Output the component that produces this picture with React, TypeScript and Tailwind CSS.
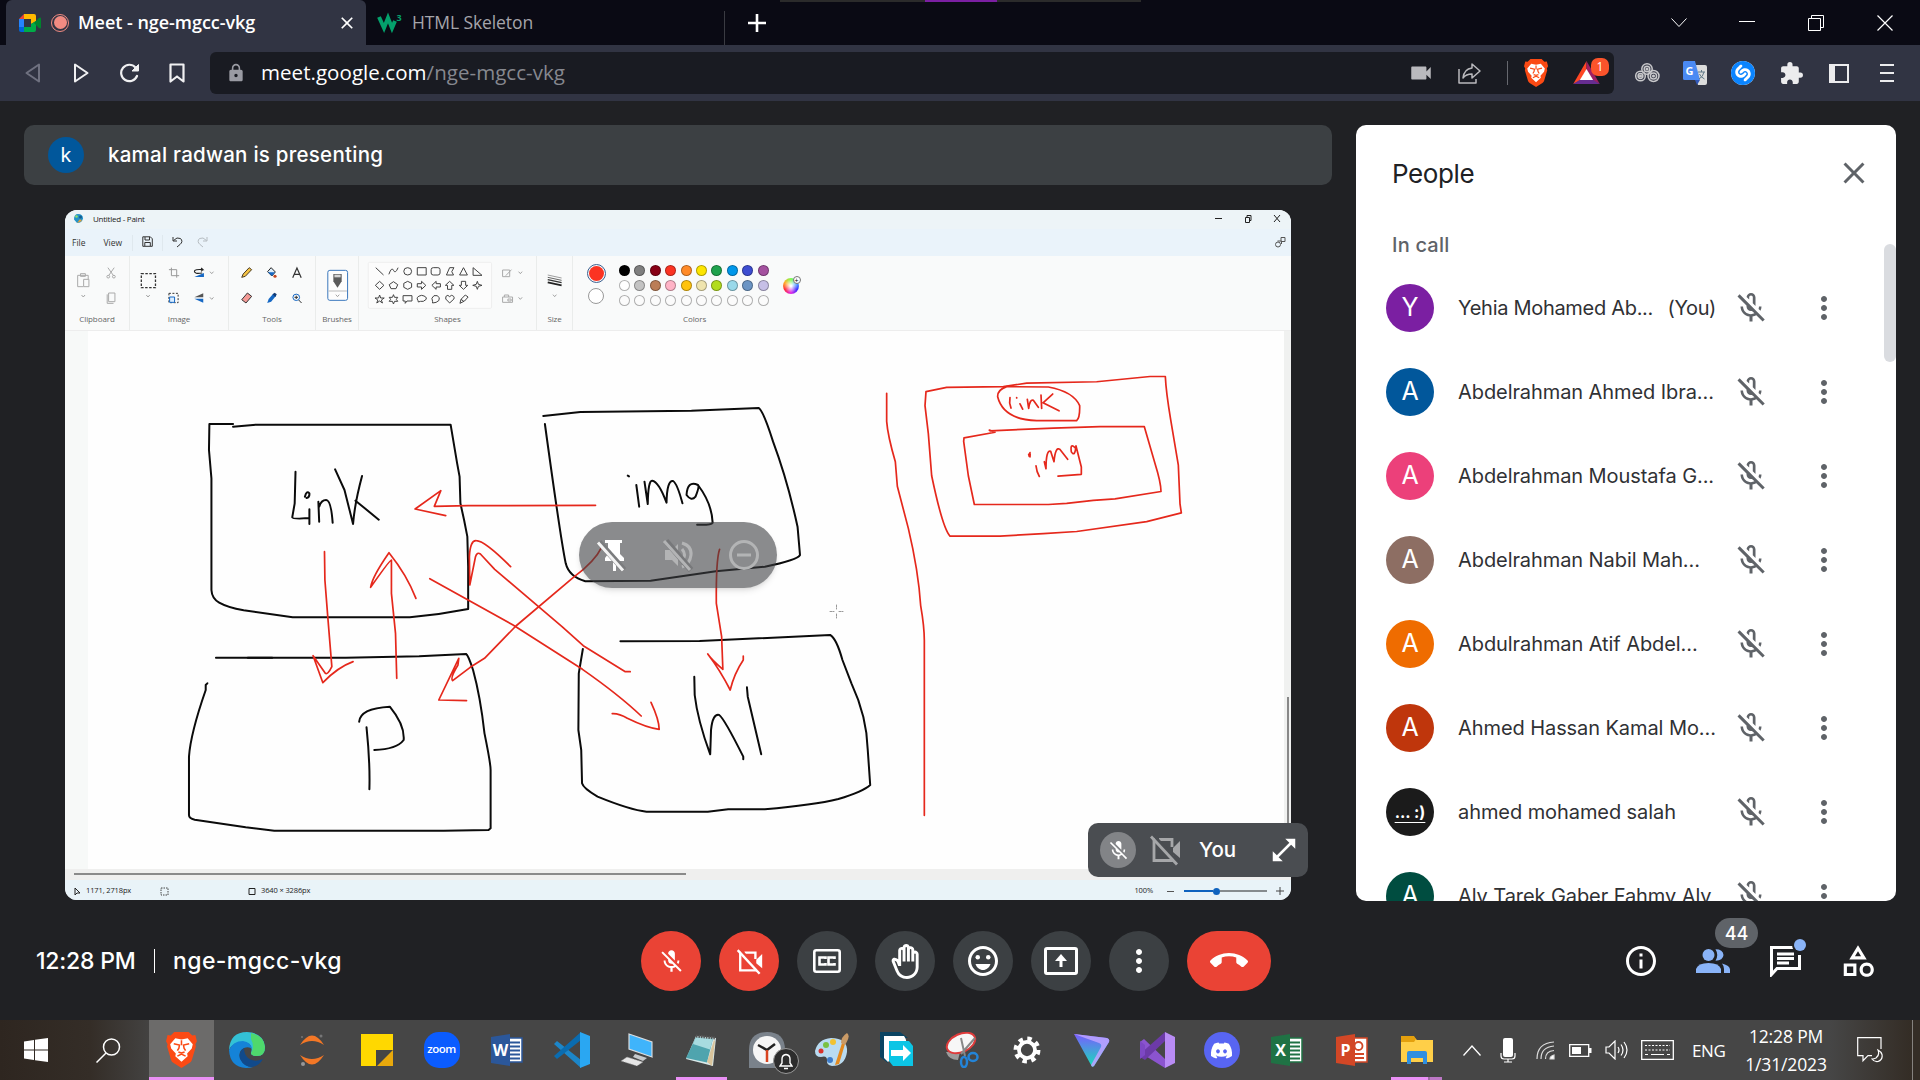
import React from "react";
import {
  MdMicOff,
  MdOutlineMicOff,
  MdOutlineBackHand,
  MdOutlineEmojiEmotions,
  MdMoreVert,
  MdCallEnd,
  MdInfoOutline,
  MdOutlineCategory,
  MdClose,
  MdVideocam,
  MdLock,
  MdExtension,
  MdOpenInFull,
} from "react-icons/md";
import { SiShazam } from "react-icons/si";
import { FaDiscord } from "react-icons/fa";

const SEGOE = "font-['Open_Sans',sans-serif]";
const GOOGLE = "font-['Inter',sans-serif]";

type Kids = { children?: React.ReactNode };

/* ---------- Browser chrome ---------- */

function MeetLogo() {
  return (
    <svg width="22" height="18" viewBox="0 0 22 18">
      <path d="M0 5 5 0v5z" fill="#ea4335" />
      <path d="M5 0h10q2 0 2 2v5l-5 3V5H5z" fill="#ffba00" />
      <path d="M0 5h5v8H0z" fill="#2684fc" />
      <path d="M0 13h5v5H2q-2 0-2-2z" fill="#0066da" />
      <path d="M5 13h7v-3l5-3v9q0 2-2 2H5z" fill="#00ac47" />
      <path d="M15 9l5-5q2-1 2 .5v9q0 1.500-2 .5z" fill="#00832d" />
    </svg>
  );
}

function TabStrip() {
  return (
    <div className="relative flex h-[45px] shrink-0 items-center bg-[#0a0a14] pl-[6px]">
      <div className="flex h-full w-[360px] items-center rounded-t-md bg-[#313443] pl-[13px] pr-[9px]">
        <MeetLogo />
        <span className="ml-[10px] flex size-[18px] items-center justify-center rounded-full border-[1.500px] border-[#f28b82]">
          <span className="size-[13px] rounded-full bg-[#f28b82]" />
        </span>
        <span className="ml-[9px] text-[18px] font-semibold tracking-[-0.030px] text-white">Meet - nge-mgcc-vkg</span>
        <MdClose className="ml-auto text-white" size={20} />
      </div>
      <div className="flex h-full w-[358px] items-center pl-[12px]">
        <svg width="25" height="18" viewBox="0 0 25 18" className="overflow-visible">
          <path d="M1 3l5 11 4-10 4 10 3-7" fill="none" stroke="#04a16c" strokeWidth="4" />
          <text x="18.500" y="7" fontSize="9" fontWeight="700" fill="#04a16c">3</text>
        </svg>
        <span className="ml-[9px] text-[17.500px] tracking-[-0.100px] text-[#a5a5ab]">HTML Skeleton</span>
      </div>
      <div className="h-[34px] w-px self-end bg-[#3a3b42]" />
      <svg width="20" height="20" viewBox="0 0 20 20" className="ml-[22px]">
        <path d="M10 1v18M1 10h18" stroke="#fff" strokeWidth="2.600" />
      </svg>
      <div className="ml-auto flex items-center pr-[27px]">
        <svg width="16" height="12" viewBox="0 0 16 12" className="mr-[52px]">
          <path d="M.5 1.500 8 9.500l7.500-8" fill="none" stroke="#fff" strokeWidth="1" />
        </svg>
        <svg width="16" height="16" viewBox="0 0 16 16" className="mr-[53px]">
          <path d="M0 6.500h16" stroke="#fff" />
        </svg>
        <svg width="16" height="16" viewBox="0 0 16 16" className="mr-[53px]">
          <path d="M.5 3.500h12v12H.5zM3.500 3V.5h12v12H13" fill="none" stroke="#fff" />
        </svg>
        <svg width="16" height="16" viewBox="0 0 16 16">
          <path d="M.5.5l15 15m0-15l-15 15" stroke="#fff" strokeWidth="1.200" />
        </svg>
      </div>
      <div className="absolute left-[780px] top-0 flex h-[2px] w-[361px] justify-center bg-[#2b2b2b]">
        <div className="w-[72px] bg-[#7b1fa2]" />
      </div>
    </div>
  );
}

function ToolCell({ children }: Kids) {
  return <div className="flex w-12 items-center justify-center">{children}</div>;
}

function Swirl({ x, y, r }: { x: number; y: number; r: number }) {
  return (
    <g fill="none" stroke="#c8c8cb" strokeWidth="1.500">
      <circle cx={x} cy={y} r={r} />
      <circle cx={x} cy={y} r={r - 2.400} />
      <circle cx={x} cy={y} r="0.800" />
    </g>
  );
}

function Toolbar() {
  return (
    <div className="flex h-14 shrink-0 items-center bg-[#313443] pl-[9px] pr-[9px]">
      <ToolCell>
        <svg width="16" height="20" viewBox="0 0 16 20"><path d="M14 1.500v17L1.500 10z" fill="none" stroke="#6f7180" strokeWidth="2" strokeLinejoin="round" /></svg>
      </ToolCell>
      <ToolCell>
        <svg width="16" height="20" viewBox="0 0 16 20"><path d="M2 1.500v17L14.500 10z" fill="none" stroke="#f0f0f2" strokeWidth="2" strokeLinejoin="round" /></svg>
      </ToolCell>
      <ToolCell>
        <svg width="21" height="20" viewBox="0 0 21 20">
          <path d="M16.500 4.500A8.200 8.200 0 1 0 18 13" fill="none" stroke="#f0f0f2" strokeWidth="2.200" strokeLinecap="round" />
          <path d="M19.500 1.500v6.500H13z" fill="#f0f0f2" stroke="#f0f0f2" strokeLinejoin="round" />
        </svg>
      </ToolCell>
      <ToolCell>
        <svg width="16" height="20" viewBox="0 0 16 20"><path d="M1.500 1.500h13v17L8 13.500l-6.500 5z" fill="none" stroke="#f0f0f2" strokeWidth="2.200" strokeLinejoin="round" /></svg>
      </ToolCell>
      <div className="ml-[9px] flex h-[42px] w-[1404px] items-center rounded-md bg-[#191b22] pl-[16px]">
        <MdLock size={20} className="text-[#9a9ba3]" />
        <span className="ml-[15px] pb-[2px] text-[20.500px] tracking-[0.050px] text-[#86888f]">
          <span className="text-white">meet.google.com</span>/nge-mgcc-vkg
        </span>
        <div className="ml-auto flex items-center pr-[4px]">
          <MdVideocam size={26} className="mr-[24px] text-[#b9b9bd]" />
          <svg width="23" height="22" viewBox="0 0 23 22" className="mr-[26px]">
            <path d="M1 7v14h17v-4M5 16q1-9 9-10V2l8 7-8 7v-4q-6 0-9 4z" fill="none" stroke="#b9b9bd" strokeWidth="1.500" strokeLinejoin="round" />
          </svg>
          <div className="mr-[16px] h-6 w-px bg-[#66686f]" />
          <BraveMark size={28} />
          <div className="relative ml-[25px] h-[30px] w-[37px]">
            <svg width="27" height="23" viewBox="0 0 30 26" className="absolute left-0 top-[3px]">
              <path d="M15 0 0 26l8-4 7-12z" fill="#ff4724" />
              <path d="M15 0l15 26-8-4-7-12z" fill="#9e1f63" />
              <path d="M0 26h30l-8-5H8z" fill="#662d91" />
              <path d="M15 9l7.500 12.500h-15z" fill="#fff" />
            </svg>
            <span className="absolute right-[1px] top-0 flex h-[18px] w-[18px] items-center justify-center rounded-[7px] bg-[#fb542b] text-[12px] text-white">1</span>
          </div>
        </div>
      </div>
      <div className="ml-[9px] flex items-center">
        <ToolCell>
          <svg width="25" height="20" viewBox="0 0 25 20"><Swirl x={5.500} y={13} r={4.800} /><Swirl x={12} y={6} r={5.200} /><Swirl x={18.500} y={13} r={5.500} /></svg>
        </ToolCell>
        <ToolCell>
          <svg width="24" height="24" viewBox="0 0 24 24">
            <path d="M9 4h13q2 0 2 2v16q0 2-2 2H15z" fill="#dcdcdc" />
            <path d="M0 1.500Q0 0 1.500 0H12l5 19H1.500Q0 19 0 17.500z" fill="#4a8af4" />
            <path d="M12 19h5l-3 5z" fill="#3057b8" />
            <text x="2.500" y="14" fontSize="11" fontWeight="700" fill="#fff">G</text>
            <path d="M15 11h7M18.500 9v2M21 11q-1 5-5 7M16.500 13q1 3 5 5" fill="none" stroke="#607988" />
          </svg>
        </ToolCell>
        <ToolCell><span className="rounded-full bg-white"><SiShazam size={24} className="text-[#0a84ff]" /></span></ToolCell>
        <ToolCell><MdExtension size={25} className="text-[#ececee]" /></ToolCell>
        <ToolCell>
          <svg width="20" height="19" viewBox="0 0 20 19"><path d="M1 1h18v17H1z" fill="none" stroke="#ececee" strokeWidth="2" /><path d="M1 1h5v17H1z" fill="#ececee" /></svg>
        </ToolCell>
        <ToolCell>
          <svg width="14" height="20" viewBox="0 0 14 20"><path d="M0 2h14M0 10h14M0 18h14" stroke="#ececee" strokeWidth="2" /></svg>
        </ToolCell>
      </div>
    </div>
  );
}

/** Orange shield with the white lion face. */
function BraveMark({ size }: { size: number }) {
  return (
    <svg width={size * 0.860} height={size} viewBox="0 0 30 35">
      <path d="M8 0h14l3.500 3.500 3-.5L30 9l-1.500 3L29 14l-4 13.500q-.5 1.500-2 2.500L15 35l-8-5q-1.500-1-2-2.500L1 14l.5-2L0 9l1.500-6 3 .5z" fill="#fb4a14" />
      <path d="M9 6l6 1.200L21 6l5 6-1 4-4.500 5 .5 2.500-6 5.500-6-5.500.5-2.500L5 16l-1-4z" fill="#fff" />
      <path d="M7.500 11.500l5.500 1.200-.5 3-1.500 2.500M22.500 11.500l-5.500 1.200.5 3 1.500 2.500M12 19.500l3 1 3-1M11 23.500l4-2 4 2M15 8v5" fill="none" stroke="#fb4a14" strokeWidth="1.500" />
    </svg>
  );
}

/* ---------- Shared Paint window ---------- */

/** A ribbon section: glyph strip on top and its caption underneath. */
function RibbonGroup({ label, width, box, children }: Kids & { label: string; width: number; box: string }) {
  return (
    <div className="flex h-full shrink-0 flex-col items-center border-r border-[#eaeceb]" style={{ width }}>
      <svg viewBox={box} preserveAspectRatio="none" className="h-[55px] w-full [&_*]:[vector-effect:non-scaling-stroke]">
        {children}
      </svg>
      <span className="mt-[2px] text-[8px] leading-[12px] tracking-[-0.100px] text-[#666]">{label}</span>
    </div>
  );
}

function Chevrons({ at }: { at: [number, number][] }) {
  return <g fill="none" stroke="#999" strokeWidth="0.900">{at.map(([x, y]) => <path key={`${x}-${y}`} d={`M${x - 5} ${y - 3}l5 6 5-6`} />)}</g>;
}

const swatches = [
  ["#000000", "#7f7f7f", "#880015", "#fb3322", "#ff8a27", "#fde500", "#1fa24d", "#0097ea", "#3d4dd1", "#a4519f"],
  ["#ffffff", "#c3c3c3", "#bb7d56", "#ffb3c6", "#ffc30e", "#efe4ae", "#b2dc1c", "#99d9ea", "#6c95c4", "#c6bfe6"],
];

function Swatch({ color }: { color: string }) {
  return <span className="size-[11px] rounded-full border border-[#0000004d]" style={{ background: color }} />;
}

function Ribbon() {
  return (
    <div className="flex h-[75px] shrink-0 border-b border-[#ededed] bg-[#f9fafa]">
      <RibbonGroup label="Clipboard" width={65} box="14 153 182 165">
        <g fill="none" stroke="#aaa" strokeWidth="1">
          <path d="M66 245H50v-34h30v12M58 206h14v8H58zM67 223h15v22H67z" />
          <path d="M136 188l16 24M154 188l-16 24" /><circle cx="137" cy="215" r="4" /><circle cx="153" cy="215" r="4" />
          <path d="M138 264h18v26h-18zM134 268v27h18" />
        </g>
        <Chevrons at={[[66, 273]]} />
      </RibbonGroup>
      <RibbonGroup label="Image" width={99} box="196 153 277 165">
        <rect x="228" y="206" width="40" height="42" fill="none" stroke="#333" strokeWidth="1.300" strokeDasharray="2.500 1.500" />
        <path d="M313 188v24h22M306 194h22v24" fill="none" stroke="#999" />
        <path d="M378 216l27-12v12z" fill="#1668c4" />
        <path d="M400 204q-22 4-22-5 0-7 24-5l-5-5m5 5l-5 5" fill="none" stroke="#222" strokeWidth="1.100" />
        <rect x="306" y="265" width="26" height="28" fill="none" stroke="#333" strokeDasharray="2 1.500" />
        <rect x="308" y="276" width="14" height="16" fill="#dceeff" stroke="#1668c4" />
        <path d="M378 277l25-12v12z" fill="#555" /><path d="M378 281l25 12v-12z" fill="#1668c4" />
        <Chevrons at={[[247, 273], [427, 203], [427, 280]]} />
      </RibbonGroup>
      <RibbonGroup label="Tools" width={87} box="473 153 243 165">
        <path d="M509 217l4-10 17-19 7 6-18 20z" fill="#f5c344" stroke="#4a3a20" />
        <path d="M582 200l10-12 12 13-10 12z" fill="#dfeefa" stroke="#222" /><path d="M583 202h20l-9 11z" fill="#1668c4" /><circle cx="603" cy="214" r="4.500" fill="#c5441c" />
        <path d="M653 218l12-29 12 29M658 208h14" fill="none" stroke="#333" strokeWidth="1.200" />
        <path d="M509 284l16-20 12 10-16 20z" fill="#f49a96" stroke="#333" />
        <path d="M581 294l4-12 13-16 8 6-14 18z" fill="#1668c4" /><path d="M596 268l6-5 6 5-4 8z" fill="#123a75" />
        <circle cx="663" cy="277" r="9.500" fill="none" stroke="#1668c4" /><path d="M658 277h10M663 272v10M670 285l8 9" stroke="#333" />
      </RibbonGroup>
      <RibbonGroup label="Brushes" width={43} box="716 153 121 165">
        <rect x="750" y="196" width="57" height="90" rx="6" fill="#fdfdfd" stroke="#3b78bd" />
        <path d="M752 258h53" stroke="#bbb" />
        <path d="M766 207h24v22l-5 8-7 11-7-11-5-8z" fill="#5b5b5b" /><path d="M769 209h18v8h-18z" fill="#d5d5d5" />
        <Chevrons at={[[778, 272]]} />
      </RibbonGroup>
      <RibbonGroup label="Shapes" width={178} box="837 153 498 165">
        <rect x="863" y="172" width="347" height="138" rx="4" fill="#fcfcfc" stroke="#ebebeb" strokeWidth="0.800" />
        <g fill="none" stroke="#444" strokeWidth="1">
          <path d="M884 188l22 22M921 208q8-24 13-12t13-8" /><circle cx="974" cy="199" r="11" />
          <path d="M1001 188h25v22h-25z" /><rect x="1040" y="188" width="25" height="22" rx="6" />
          <path d="M1092 188h12l-6 12 5 10h-20zM1131 188l11 22h-22zM1158 188v23h25z" />
          <path d="M895 229l12 12-12 12-12-12zM934 230l12 9-5 12h-14l-5-12zM974 229l11 6v12l-11 6-11-6v-12z" />
          <path d="M1001 236h12v-7l12 12-12 12v-7h-12zM1066 236h-12v-7l-12 12 12 12v-7h12zM1086 253v-12h-6l12-12 12 12h-6v12zM1125 229v12h-6l12 12 12-12h-6v-12zM1170 229l3 9 10 3-10 3-3 9-3-9-10-3 10-3z" />
          <path d="M895 270l3 9h10l-8 6 3 9-8-6-8 6 3-9-8-6h10zM934 269l3 8h9l-4 6 4 6h-9l-3 8-3-8h-9l4-6-4-6h9z" />
          <path d="M961 272h25v16h-14l-5 7v-7h-6zM1004 291l-1-4q-8-12 10-16 16 3 13 12-8 9-16 6zM1044 294v-5q-6-10 4-17 10-3 15 6 2 10-9 14zM1092 294l-11-12q-2-10 6-11l5 4 5-4q10 2 7 11zM1121 295l3-12 12-13 8 6-10 12zM1124 283l8 6" />
        </g>
        <path d="M1241 195h20v20h-20zM1250 212l16-18M1241 276h28v16h-28zM1246 276v-6h12v6M1256 282h9v6h-9z" fill="none" stroke="#aaa" />
        <Chevrons at={[[1291, 203], [1291, 280]]} />
      </RibbonGroup>
      <RibbonGroup label="Size" width={36} box="1335 153 101 165">
        <path d="M1366 210l40 9" stroke="#777" strokeWidth="0.700" /><path d="M1366 217l40 9" stroke="#555" strokeWidth="0.900" />
        <path d="M1366 224l40 9" stroke="#333" strokeWidth="1.300" /><path d="M1366 232l40 9" stroke="#222" strokeWidth="1.900" />
        <Chevrons at={[[1386, 272]]} />
      </RibbonGroup>
      <div className="flex w-[243px] flex-col">
        <div className="flex h-[57px] pl-[13px]">
          <div className="flex w-5 flex-col items-center gap-[5px] pt-[8px]">
            <span className="flex size-[19px] shrink-0 items-center justify-center rounded-full border border-[#3b5f8f]"><span className="size-[15px] rounded-full bg-[#fb3322]" /></span>
            <span className="size-[16px] shrink-0 rounded-full border border-[#999] bg-white" />
          </div>
          <div className="ml-[13px] mt-[8.500px] grid grid-cols-10 content-start gap-x-[4.400px] gap-y-[4.400px]">
            {swatches.flat().map((c) => <Swatch key={c} color={c} />)}
            {Array.from({ length: 10 }, (_, i) => <Swatch key={i} color="#fbfbfb" />)}
          </div>
          <div className="relative ml-[14px] mt-[22px] size-4 rounded-full bg-[radial-gradient(circle,#fff_5%,transparent_60%),conic-gradient(#7dff4f,#49b4ff,#3b2bff,#e02be8,#ff2b3d,#ffb02b,#7dff4f)]">
            <span className="absolute -right-[2px] -top-[2px] flex size-2 items-center justify-center rounded-full border border-[#777] bg-white text-[7px] leading-none">+</span>
          </div>
        </div>
        <span className="pl-[110px] text-[8px] leading-[12px] tracking-[-0.100px] text-[#666]">Colors</span>
      </div>
    </div>
  );
}

/** Freehand strokes on the Paint canvas. */
function Sketch() {
  const crop = "scale(0.408163 0.333333)";
  return (
    <svg viewBox="65 331 1226 538" className="h-full w-full [&_path]:[vector-effect:non-scaling-stroke]" fill="none" strokeWidth="2" strokeLinecap="round" strokeLinejoin="round">
      <g stroke="#0b0b0b">
        <g transform={`translate(60 380) ${crop}`}>
          <path d="M424 132H366L365 210l6 85V630Q372 655 390 668 410 682 450 691l120 21H857q73-8 143-25V560l-2-90-8-50-9-50-2-80-6-40L957 134H480l-56 6" />
          <path d="M577 275l-2 95-6 42q1 6 41 2M611 388v44M600 350q4-20 11-10 1 12-7 14M633 365l2 60M635 380q5-20 17-20 12 0 16 68M674 268l23 62 21 102q4-62 22-144M724 362l57 57" />
          <path d="M382 833H520" />
          <path d="M460 833H700L880 829 995 822q5 3 17 48 18 80 28 190 15 90 15 110v175l-5 5-110 2H525l-70-10-125-23q-14-4-14-14V1130q4-70 41-200v-15l4-5" />
          <path d="M751 1042q9 108 7 186M733 1025q2-40 75-45 37 55 34 100-17 28-72 30" />
        </g>
        <g transform={`translate(520 380) ${crop}`}>
          <path d="M57 108l91-12 272-4 165-8q12 11 35 101 35 115 60 255l6 85q-6 15-86 35l-120 14-160 28-160 2q-40-14-48-54Q100 480 61 132" />
          <path d="M285 315l7 65M264 287l3 2M305 305l8 67q1-72 11-70 16 3 35 66 1-68 16-65 10 7 23 67M436 315q-26-15-28 30 12 20 22 5 10-30 6-35 34 55 36 113-4 8-38 6" />
          <path d="M246 784l194-1 320-18q15 10 30 75l22 70q38 100 40 200l6 105q-18 20-78 42-60 18-180 31H510l-50 7H310q-40-5-120-45-35-25-38-40l-2-100-7-60 1-170 10-73" />
          <path d="M427 890l1 55q7 75 38 178l2-73q4-50 20-45 12 10 59 125v8M556 922l2 28 33 173" />
        </g>
      </g>
      <g stroke="#e5281c" strokeWidth="1.700">
        <g transform={`translate(60 380) ${crop}`}>
          <path d="M648 515l1 85 7 110 10 150q-10 25-16 20l-30-53 24 81q36-46 74-63" />
          <path d="M825 895l-3-135-10-120V540q-4 0-51 82 4-32 45-104 44 67 66 137" />
          <path d="M1312 376l-312 1-83 2 16-47-63 55 75 20" />
          <path d="M906 596l204 139 170 133q90 77 144 140M1353 1001q17-1 37 14 50 30 78 33 0-28-20-81" />
          <path d="M1397 875h-12l-103-78-52-57-165-172-35-46q-8-7-12 8l-14 85-1-85q2-50 17-48 20 0 84 78" />
          <path d="M1328 500q-18 45-68 90l-143 148-77 97-35 27-43 40q-7-7 13-47l2-20-49 125 68 2" />
        </g>
        <g transform={`translate(520 380) ${crop}`}>
          <path d="M489 508q-9 32-8 162l13 100 3 98q-27-28-37-46 30 48 55 108 10-50 32-90v-12" />
        </g>
        <g transform="translate(860 360) scale(0.333333 0.350754)">
          <path d="M80 95v80q3 40 26 115l6 70 33 120q30 120 37 220 11 60 11 100v498" />
          <path d="M198 90l62-12 170-2 70-10 210-4L870 47h46q2 43 16 123l23 130 5 110 4 26-104 25-210 28-100 6-130 7H270q-22-22-55-172L205 210l-10-80z" />
          <path d="M440 76q-28 9-27 29 17 65 117 68H650q10-8 9-43-19-40-94-53z" />
          <path d="M450 107l-1 16 4 14M480 125l8 15M470 107v1M502 112l4 26q4-28 14-23l15 20M543 100l2 38M578 97l-29 25 48 23" />
          <path d="M388 200l17 6-93 16-1 10 14 98 18 82H565l55-3 80-9 65-4 138-21q0-25-18-80L853 190H720l-140 4-190 8" />
          <path d="M506 270q6-10 4 6-6-2 0-12M528 302q2 18 10 30M553 290l5 20q0-55 14-50l10 30q4-45 18-35l23 28M645 250q-15-15-11 12 11 16 14-17l16 60v21l-70 5" />
        </g>
      </g>
      <path d="M830 611.500h4m5 0h4M836.500 605v4m0 5v4" stroke="#999" strokeWidth="1" strokeDasharray="2 1" />
    </svg>
  );
}

function PaintWindow() {
  return (
    <div className={`relative ml-[41px] mt-[25px] flex h-[690px] w-[1226px] flex-col overflow-hidden rounded-xl bg-[#fefefe] ${SEGOE}`}>
      <div className="flex h-[19px] shrink-0 items-center bg-[#edf4f7] pb-[2px] pl-2 pr-[9px] text-[8px] tracking-[-0.250px] text-[#222]">
        <svg width="11" height="11" viewBox="0 0 11 11">
          <path d="M5 1q5 0 5 4.500Q9 10 4 10L1 6.500Q1 1 5 1z" fill="#2393c8" /><circle cx="3.500" cy="3.500" r="1.300" fill="#8ee06d" /><circle cx="7.500" cy="4" r="1.500" fill="#125e93" /><path d="M4 10l3-4 2 2z" fill="#e0a13a" />
        </svg>
        <span className="ml-[9px]">Untitled - Paint</span>
        <svg width="70" height="10" viewBox="0 0 70 10" className="ml-auto" fill="none" stroke="#222">
          <path d="M3 4.500h7M33.500 3.500h4v5h-4zM35 3V1.500h4v5h-1.500M62 1l6 7m0-7l-6 7" />
        </svg>
      </div>
      <div className="flex h-[27px] shrink-0 items-center bg-[#eaf3fa] pl-[7px] pr-[5px] pt-px text-[8.500px] text-[#333]">
        <span>File</span>
        <span className="ml-[18px]">View</span>
        <span className="ml-[10px] h-4 w-px bg-[#dfe8ee]" />
        <svg width="11" height="11" viewBox="0 0 11 11" className="mb-[3px] ml-[9px]" fill="none" stroke="#333"><path d="M.8.800h7.500l2 2v7.500H.8zM3 1v3h4.500V1M2.800 10V6.500h5.500V10" /></svg>
        <span className="ml-[9px] h-4 w-px bg-[#dfe8ee]" />
        <svg width="11" height="12" viewBox="0 0 11 12" className="mb-[3px] ml-[9px]" fill="none" stroke="#333"><path d="M1 1v4h4M1.500 4.500Q5 .5 8.500 2.500q3 3-.5 6l-3 2.500" /></svg>
        <svg width="11" height="12" viewBox="0 0 11 12" className="mb-[3px] ml-[14px]" fill="none" stroke="#b5bbc0"><path d="M10 1v4H6M9.500 4.500Q6 .5 2.500 2.500q-3 3 .5 6l3 2.500" /></svg>
        <svg width="12" height="12" viewBox="0 0 12 12" className="mb-[3px] ml-auto" fill="none" stroke="#555"><path d="M7 1.500h4v4H7zM3.500 5h4v3" /><circle cx="4" cy="8.500" r="2.500" /></svg>
      </div>
      <Ribbon />
      <div className="relative flex h-[538px] shrink-0">
        <div className="absolute inset-y-0 left-0 w-[23px] bg-[#f7f9f8]" />
        <div className="absolute inset-y-0 right-0 flex w-[7px] items-end justify-center bg-[#f0f1f0]"><div className="h-[172px] w-[2px] bg-[#888]" /></div>
        <div className="relative h-full w-full"><Sketch /></div>
      </div>
      <div className="flex h-[11px] shrink-0 items-center bg-[#efefee] pb-px pl-[9px]"><div className="h-[2px] w-[612px] bg-[#8a8a8a]" /></div>
      <div className="flex h-5 shrink-0 items-center bg-[#e9f3f8] pl-[9px] pr-[7px] pt-[2px] text-[7.500px] tracking-[-0.130px] text-[#222]">
        <svg width="7" height="9" viewBox="0 0 7 9"><path d="M1 1v7l2-2h3z" fill="none" stroke="#222" /></svg>
        <span className="ml-[5px] w-[74px]">1171, 2718px</span>
        <svg width="9" height="9" viewBox="0 0 9 9"><path d="M1 1h7v7H1z" fill="none" stroke="#444" strokeDasharray="1.500 1" /></svg>
        <svg width="8" height="9" viewBox="0 0 8 9" className="ml-[79px]"><path d="M1 1.500h6v6H1z" fill="none" stroke="#222" /></svg>
        <span className="ml-[5px]">3640 × 3286px</span>
        <span className="ml-auto">100%</span>
        <span className="ml-[14px] h-px w-[7px] bg-[#555]" />
        <div className="ml-[10px] flex items-center">
          <span className="h-[2px] w-[29px] bg-[#0f62be]" /><span className="size-[7px] rounded-full bg-[#0f62be]" /><span className="h-[2px] w-[47px] bg-[#868b8e]" />
        </div>
        <svg width="8" height="8" viewBox="0 0 8 8" className="ml-[9px]"><path d="M4 0v8M0 4h8" stroke="#444" /></svg>
      </div>
      <div className="absolute left-[514px] top-[312px] flex h-[66px] w-[198px] items-center justify-between rounded-full bg-[#3c3e41]/60 pl-[18px] pr-[17px] shadow-md">
        <svg width="30" height="34" viewBox="0 0 30 34">
          <path d="M8 2h17v3h-2v11l4 4v3h-8v10h-3V23H8v-3l3-4V5H8z" fill="#fff" />
          <path d="M2 4l25 28" stroke="#7b7c7e" strokeWidth="6" /><path d="M1 4.500l25 28" stroke="#f3f3f3" strokeWidth="3" />
        </svg>
        <svg width="32" height="34" viewBox="0 0 32 34" fill="none" stroke="#b3b4b5" strokeWidth="3">
          <path d="M3 12h7l6-6v22l-6-6H3z" fill="#b3b4b5" stroke="none" /><path d="M20 11q5 6 0 12M20 5q10 3 9 12-1 9-9 12" /><path d="M4 3l25 29" stroke="#77787a" strokeWidth="6" /><path d="M2 3l26 29" />
        </svg>
        <svg width="32" height="32" viewBox="0 0 32 32" fill="none" stroke="#b3b4b5" strokeWidth="3"><circle cx="16" cy="16" r="13.500" /><path d="M9 16h14" /></svg>
      </div>
    </div>
  );
}

/* ---------- Meet ---------- */

/** Camera outline crossed out, with square corners. */
function CameraOff({ size, slash }: { size: number; slash: string }) {
  return (
    <svg width={size} height={size} viewBox="0 0 32 32" fill="none" stroke="currentColor" strokeWidth="2.800">
      <path d="M10 5.500h13V13M5 4v22.500h18.500v-5" />
      <path d="M24 14l7-7v17l-7-6z" fill="currentColor" stroke="none" />
      <path d="M4.500 1l25 28" stroke={slash} strokeWidth="3" />
      <path d="M2 2.500l26 28" />
    </svg>
  );
}

function SelfView() {
  return (
    <div className="absolute left-[1088px] top-[722px] flex h-[54px] w-[220px] items-center rounded-[10px] bg-[#4a4d51] pl-3">
      <span className="flex size-9 items-center justify-center rounded-full bg-[#828487] text-white"><MdMicOff size={23} /></span>
      <span className="ml-[13px] text-[#a6a7a9]"><CameraOff size={32} slash="#4a4d51" /></span>
      <span className="ml-[18px] text-[20.500px] font-medium text-white">You</span>
      <MdOpenInFull size={30} className="ml-auto mr-[9px] text-white" />
    </div>
  );
}

const people = [
  { name: "Yehia Mohamed Ab...", initial: "Y", color: "bg-[#7b1fa2]", you: true },
  { name: "Abdelrahman Ahmed Ibra...", initial: "A", color: "bg-[#01579b]" },
  { name: "Abdelrahman Moustafa G...", initial: "A", color: "bg-[#ec407a]" },
  { name: "Abdelrahman Nabil Mah...", initial: "A", color: "bg-[#8d6e63]" },
  { name: "Abdulrahman Atif Abdel...", initial: "A", color: "bg-[#ef6c00]" },
  { name: "Ahmed Hassan Kamal Mo...", initial: "A", color: "bg-[#bf360c]" },
  { name: "ahmed mohamed salah", initial: "... :)", color: "bg-[#1b1b1b]" },
  { name: "Aly Tarek Gaber Fahmy Aly", initial: "A", color: "bg-[#004d40]" },
];

function PeoplePanel() {
  return (
    <aside className="relative ml-6 mt-6 h-[776px] w-[540px] overflow-hidden rounded-[10px] bg-white">
      <div className="flex h-24 items-center pl-9 pr-6">
        <h2 className="text-[26px] tracking-[-0.400px] text-[#202124]">People</h2>
        <MdClose size={36} className="ml-auto text-[#5f6368]" />
      </div>
      <div className="flex h-[45px] items-center pl-9 pt-[3px] text-[20px] font-medium tracking-[0.200px] text-[#5f6368]">In call</div>
      {people.map((p) => (
        <div key={p.name} className="flex h-[84px] items-center pl-[30px]">
          <span className={`flex size-12 items-center justify-center rounded-full text-white ${p.color} ${p.initial === "A" || p.initial === "Y" ? "text-[25px]" : "text-[16px] font-bold underline underline-offset-4"}`}>
            {p.initial}
          </span>
          <span className="ml-6 flex w-[275px] justify-between whitespace-nowrap pr-[17px] text-[20px] tracking-[-0.080px] text-[#303134]">
            <span className={p.you ? "tracking-[-0.300px]" : ""}>{p.name}</span>
            {p.you && <span className="tracking-[-0.400px]">(You)</span>}
          </span>
          <MdOutlineMicOff size={36} className="text-[#5f6368]" />
          <MdMoreVert size={36} className="ml-[37px] text-[#5f6368]" />
        </div>
      ))}
      <div className="absolute right-0 top-[119px] h-[118px] w-3 rounded-full bg-[#dadce0]" />
    </aside>
  );
}

function RoundButton({ children, danger }: Kids & { danger?: boolean }) {
  return <button className={`flex size-[60px] items-center justify-center rounded-full text-white ${danger ? "bg-[#ea4335]" : "bg-[#3c4043]"}`}>{children}</button>;
}

function MeetBar() {
  return (
    <div className="flex h-[118px] items-center text-white">
      <div className="flex w-[641px] items-center pl-9 text-[23px] font-medium">
        <span className="w-[118px] tracking-[-0.200px]">12:28 PM</span>
        <span className="h-6 w-px bg-white" />
        <span className="ml-[18px] tracking-[0.400px]">nge-mgcc-vkg</span>
      </div>
      <div className="flex gap-[18px]">
        <RoundButton danger><MdMicOff size={27} /></RoundButton>
        <RoundButton danger><CameraOff size={27} slash="#ea4335" /></RoundButton>
        <RoundButton>
          <svg width="28" height="24" viewBox="0 0 28 24" fill="none" stroke="#fff" strokeWidth="2.600">
            <rect x="1.300" y="1.300" width="25.400" height="21.400" rx="2" /><path d="M12.500 10V8.500h-6v7h6V14M21.500 10V8.500h-6v7h6V14" />
          </svg>
        </RoundButton>
        <RoundButton><MdOutlineBackHand size={35} /></RoundButton>
        <RoundButton><MdOutlineEmojiEmotions size={36} /></RoundButton>
        <RoundButton>
          <svg width="34" height="28" viewBox="0 0 34 28" fill="none" stroke="#fff" strokeWidth="3">
            <rect x="1.500" y="1.500" width="31" height="25" rx="1.500" /><path d="M17 20v-8" /><path d="M17 7l6 7H11z" fill="#fff" stroke="none" />
          </svg>
        </RoundButton>
        <RoundButton><MdMoreVert size={36} /></RoundButton>
        <button className="flex h-[60px] w-[84px] items-center justify-center rounded-full bg-[#ea4335]"><MdCallEnd size={38} /></button>
      </div>
      <div className="ml-auto flex items-center pr-[43px]">
        <MdInfoOutline size={36} />
        <div className="relative ml-[37px]">
          <svg width="34" height="24" viewBox="0 0 34 24" fill="#8ab4f8">
            <circle cx="12.500" cy="6" r="6" /><path d="M0 24v-4q2-6 12.500-6T25 20v4z" /><path d="M19.500.3q7.500 0 8 5.700-.5 5.700-8 5.700 3.500-5.700 0-11.400zM26 14.500q8 2 8 6V24h-6v-4q0-3-2-5.500z" />
          </svg>
          <span className="absolute -top-[31px] left-[19px] flex h-[30px] w-[43px] items-center justify-center rounded-full bg-[#5f6368] text-[18px] font-medium">44</span>
        </div>
        <div className="relative ml-[40px]">
          <svg width="31" height="31" viewBox="0 0 31 31" fill="none" stroke="#fff" strokeWidth="3">
            <path d="M24 1.500H1.500v27L7 22.500h22.500V9M7 8h17M7 12.500h17M7 17h12" />
          </svg>
          <span className="absolute -right-[5px] -top-[7px] size-3 rounded-full bg-[#8ab4f8] ring-2 ring-[#202124]" />
        </div>
        <MdOutlineCategory size={38} className="ml-[38px]" />
      </div>
    </div>
  );
}

/* ---------- Windows taskbar ---------- */

function Svg({ children, size = 36 }: Kids & { size?: number }) {
  return <svg width={size} height={size} viewBox="0 0 36 36">{children}</svg>;
}

const apps: { id: string; icon: React.ReactNode }[] = [
  { id: "brave", icon: <BraveMark size={36} /> },
  {
    id: "edge",
    icon: (
      <Svg>
        <path d="M0 18Q1 0 18 0q17 1 18 15 0 9-8 9-6 0-6-3 3-10-8-11Q4 10 0 18z" fill="#33c1d6" />
        <path d="M22 1q13 3 14 14 0 9-8 9-6 0-6-3 4-6 0-14z" fill="#4fd96c" />
        <path d="M0 18q4-9 14-9 8 1 9 8-3-3-8-1-6 3-4 10 4 9 13 9-3 1-7 1Q1 35 0 18z" fill="#1583d8" />
        <path d="M15 16q-6 4-4 11 4 8 12 8 7-1 11-8-9 4-15-1-4-4-4-10z" fill="#114a8b" />
      </Svg>
    ),
  },
  { id: "jupyter", icon: <svg width="26" height="34" viewBox="0 0 26 34"><path d="M1 12Q13-7 25 12 13 4 1 12zM1 22q12 19 24 0-12 8-24 0z" fill="#f37726" /><circle cx="22" cy="3" r="1.500" fill="#767677" /><circle cx="4" cy="31" r="2" fill="#989798" /><circle cx="3" cy="4" r="1" fill="#767677" /></svg> },
  { id: "notes", icon: <svg width="32" height="32" viewBox="0 0 32 32"><path d="M0 0h32v32H0z" fill="#ffd800" /><path d="M15 32l17-16v16z" fill="#e9a90c" /><path d="M15 16h17L16 32h-1z" fill="#454545" /></svg> },
  { id: "zoom", icon: <span className="flex size-9 items-center justify-center rounded-[15px] bg-[#0b5cff] pb-[2px] text-[11.500px] font-semibold tracking-[-0.500px] text-white">zoom</span> },
  { id: "word", icon: <OfficeMark letter="W" color="#2b579a" /> },
  { id: "vscode", icon: <Svg><path d="M3 9l24 19v8L0 12z" fill="#1c86c9" /><path d="M3 27L27 8V0L0 24z" fill="#0a6cb0" /><path d="M26 0l10 4v28l-10 4z" fill="#2aa7f2" /></Svg> },
  { id: "pc", icon: <Svg><path d="M10 2l23 8v15L10 17z" fill="#3fb4fb" stroke="#d9dde0" strokeWidth="1.200" /><path d="M33 10l1 .5V26l-1-1z" fill="#999" /><path d="M16 22l12 4-4 3-10-4z" fill="#c6c9cb" /><path d="M8 25l16 5-6 4-16-5z" fill="#e6e6e6" stroke="#888" strokeDasharray="1.500 1" strokeWidth="0.600" /></Svg> },
  { id: "notepad", icon: <Svg><path d="M12 4l20 2-3 28L2 27z" fill="#d9e9ea" /><path d="M12 5l17 1.500-6 24L2 26z" fill="#4fa4ae" /><path d="M12 5l17 1.500-3 11L9 12z" fill="#a8dbe0" /><path d="M12 4l19 2" stroke="#555" strokeWidth="3" strokeDasharray="1.500 1" /><path d="M23 30l7-22 1 1-3 25z" fill="#d9c49c" /></Svg> },
  {
    id: "clock",
    icon: (
      <span className="relative">
        <Svg><path d="M0 36V18Q0 0 18 0t18 18v18z" fill="#7a828b" /><circle cx="18" cy="18" r="14" fill="#f6f6f6" /><path d="M9 13l9 5 8-6" fill="none" stroke="#222" strokeWidth="2.500" /><path d="M18 18v12" stroke="#d8431f" strokeWidth="2.500" /></Svg>
        <span className="absolute -bottom-[6px] -right-[14px] flex size-[26px] items-center justify-center rounded-full border border-[#999] bg-[#2d2d2d]">
          <svg width="14" height="17" viewBox="0 0 14 17" fill="none" stroke="#fff" strokeWidth="1.400"><path d="M1 13h12l-2-3V6q0-4-4-4.500Q3 2 3 6v4zM5 15.500h4" /></svg>
        </span>
      </span>
    ),
  },
  { id: "paint", icon: <Svg><path d="M17 6Q34 6 33 20q-2 14-15 14-6-1-5-6 0-5-6-3-6 0-6-6Q4 7 17 6z" fill="#b9dbf1" /><circle cx="7" cy="19" r="2.500" fill="#d8322c" /><circle cx="12" cy="13" r="3" fill="#7ac143" /><circle cx="19" cy="10" r="3" fill="#f2c230" /><circle cx="16" cy="28" r="3" fill="#3f7cc9" /><path d="M21 33l7-22 3 1-6 20z" fill="#e48a1f" /><path d="M27 11q0-6 6-10 4 3-2 12z" fill="#c99a66" /></Svg> },
  { id: "share", icon: <Svg><path d="M1 0h20l8 6H9v25l-8-6z" fill="#0b4462" /><path d="M5 4h20q3 4 2 8L9 30l-4-4z" fill="#fff" /><path d="M10 9h20l4 5v20H14l-4-5z" fill="#0cc5e5" /><path d="M12 18h12v-5l8 8-8 8v-5H12z" fill="#fff" /></Svg> },
  { id: "snip", icon: <Svg><path d="M2 20h14l-2 8q-9 0-12-8z" fill="#9c9c9c" /><ellipse cx="17" cy="11" rx="15" ry="9" transform="rotate(-24 17 11)" fill="#f7f7f7" stroke="#df3b3b" strokeWidth="2" /><path d="M17 6l4 18M31 6L17 22" stroke="#888" strokeWidth="2" /><ellipse cx="20" cy="30" rx="3" ry="5" fill="none" stroke="#2384d8" strokeWidth="2.500" /><ellipse cx="29" cy="25" rx="4.500" ry="4" fill="none" stroke="#2384d8" strokeWidth="2.500" /></Svg> },
  { id: "settings", icon: <Svg size={34}><g stroke="#fff" fill="none"><circle cx="18" cy="18" r="8.500" strokeWidth="4" /><circle cx="18" cy="18" r="12" strokeWidth="4.500" strokeDasharray="4.700 4.720" /></g></Svg> },
  { id: "vpn", icon: <Svg><defs><linearGradient id="vpnFill" x1="0" y1="0" x2="0" y2="1"><stop offset="0" stopColor="#7a5cff" /><stop offset="1" stopColor="#16e0b8" /></linearGradient></defs><path d="M0 2l33 4q3 1 2 4L20 34q-2 2-3-1z" fill="url(#vpnFill)" /><path d="M0 2l33 4q3 1 2 4L20 34q-2 2-3-1l10-18q1-3-2-4z" fill="#b9a2ff" opacity="0.900" /></Svg> },
  { id: "visualstudio", icon: <Svg><path d="M1 10l4-3 21 20v9L5 23v3l-4-1z" fill="#8b54cf" /><path d="M1 25l5 3L26 9V0L1 22z" fill="#6c3aa8" /><path d="M26 0l10 5v26l-10 5z" fill="#b98cf5" /><path d="M1 9l5 4v10l-5 4z" fill="#7d48c4" /></Svg> },
  { id: "discord", icon: <span className="flex size-9 items-center justify-center rounded-full bg-[#5865f2] text-white"><FaDiscord size={23} /></span> },
  { id: "excel", icon: <OfficeMark letter="X" color="#1f7244" /> },
  { id: "powerpoint", icon: <OfficeMark letter="P" color="#d24726" /> },
  { id: "explorer", icon: <svg width="32" height="28" viewBox="0 0 32 28"><path d="M0 1h13l3 3h16v22H0z" fill="#ffcf48" /><path d="M0 0h13l2 3-2 3H0z" fill="#e4a00d" /><path d="M6 28V17q0-2 2-2h16q2 0 2 2v11h-4v-6H10v6z" fill="#2f8fe0" /></svg> },
];

function OfficeMark({ letter, color }: { letter: string; color: string }) {
  return (
    <svg width="32" height="32" viewBox="0 0 32 32">
      <path d="M17 4h14v24H17z" fill="#fff" stroke={color} strokeWidth="1.500" />
      {letter === "P" ? (
        <g stroke={color} strokeWidth="1.800" fill="none"><circle cx="22.500" cy="12" r="4" /><path d="M19 20h9M19 24h9" /></g>
      ) : (
        <path d="M19 8.500h10M19 12.500h10M19 16.500h10M19 20.500h10M19 24.500h10" stroke={color} strokeWidth="1.800" />
      )}
      <path d="M0 3l19-3v32L0 29z" fill={color} />
      <text x="9.500" y="22" textAnchor="middle" fontSize="16" fontWeight="700" fill="#fff">{letter}</text>
    </svg>
  );
}

function Taskbar() {
  return (
    <div className={`flex h-[60px] shrink-0 bg-[linear-gradient(90deg,#2e2620_0px,#342d27_90px,#464646_160px,#464646_1830px,#342d26_1910px)] text-white ${SEGOE}`}>
      <div className="flex w-[149px] items-center pl-6">
        <svg width="24" height="24" viewBox="0 0 24 24" fill="#fff"><path d="M0 3.500l10-1.500v9.500H0zM11 1.800L24 0v11.500H11zM0 12.500h10V22L0 20.500zM11 12.500h13V24l-13-1.800z" /></svg>
        <svg width="25" height="25" viewBox="0 0 25 25" className="ml-12" fill="none" stroke="#fff" strokeWidth="1.500"><circle cx="15.500" cy="9" r="8" /><path d="M10 15L.5 24.500" /></svg>
      </div>
      {apps.map((app) => (
        <div key={app.id} className={`relative flex w-[65px] items-center justify-center ${app.id === "brave" ? "bg-[#6c6b6a]" : ""}`}>
          {app.icon}
          {app.id === "brave" && <span className="absolute inset-x-0 bottom-0 h-[3px] bg-[#ea90f5]" />}
          {app.id === "notepad" && <span className="absolute inset-x-[7px] bottom-0 h-[3px] bg-[#ea90f5]" />}
          {app.id === "explorer" && <span className="absolute inset-x-[7px] bottom-0 h-[3px] bg-[linear-gradient(90deg,#ea90f5_37px,#9b6ba1_37px,#9b6ba1_39px,#bd78c6_39px)]" />}
        </div>
      ))}
      <div className="flex flex-1 items-center pl-[14px]">
        <svg width="18" height="11" viewBox="0 0 18 11" fill="none" stroke="#fff" strokeWidth="1.300"><path d="M.5 10.500L9 1l8.500 9.500" /></svg>
        <svg width="16" height="25" viewBox="0 0 16 25" className="ml-[19px]"><rect x="3" y="0" width="10" height="19" rx="2" fill="#fff" /><path d="M1 15v3q0 3 3 3h8q3 0 3-3v-3M8 21v3M4 24h8" fill="none" stroke="#fff" strokeWidth="1.200" /></svg>
        <svg width="19" height="19" viewBox="0 0 19 19" className="ml-[20px]" fill="none" stroke="#ddd" strokeWidth="1.200"><path d="M1 18Q1 2 18 1M5 18Q5 6 18 5M9.500 18Q9.500 10 18 9.500" /><path d="M14 18q0-3 4-4v4z" fill="#fff" /></svg>
        <svg width="23" height="13" viewBox="0 0 23 13" className="ml-[14px]"><path d="M.7.700h19v11.600h-19z" fill="none" stroke="#fff" strokeWidth="1.300" /><path d="M3 3h9v7H3zM20 4h2.500v5H20z" fill="#fff" /></svg>
        <svg width="23" height="20" viewBox="0 0 23 20" className="ml-[13px]" fill="none" stroke="#fff" strokeWidth="1.200"><path d="M1 7h3l6-6v18l-6-6H1zM13 7q2 3 0 6M16 4.500q4 5.500 0 11M19 2q6 8 0 16" /></svg>
        <svg width="33" height="20" viewBox="0 0 33 20" className="ml-[13px]" fill="none" stroke="#fff"><path d="M.7.700h31.600v18.600H.7z" strokeWidth="1.300" /><path d="M4 5.500h25M4 10h25" strokeDasharray="2 1.500" /><path d="M4 14.500h3m3 0h13m3 0h3" /></svg>
        <span className="ml-[18px] w-[34px] pt-px text-[17px] tracking-[-0.400px]">ENG</span>
        <div className="ml-[17px] flex w-[86px] flex-col items-center text-[17.500px] leading-[28px] tracking-[-0.150px]">
          <span>12:28 PM</span><span>1/31/2023</span>
        </div>
        <svg width="26" height="26" viewBox="0 0 26 26" className="ml-[28px]" fill="none" stroke="#fff" strokeWidth="1.200"><path d="M24 12V.700H.7v18H6v5l5-5h4M21 13q2 5-2 8-2 1-4 1 2 3 6 2.500 5-2 4-7-1-3-4-4.500z" /></svg>
        <div className="ml-auto mr-[7px] h-full w-px bg-[#85827f]" />
      </div>
    </div>
  );
}

export default function App() {
  return (
    <div className={`flex h-[1080px] w-[1920px] flex-col overflow-hidden bg-[#202124] ${SEGOE}`}>
      <TabStrip />
      <Toolbar />
      <main className={`relative flex h-[919px] shrink-0 flex-col ${GOOGLE}`}>
        <div className="flex h-[801px] shrink-0">
          <section className="w-[1332px] pl-6 pt-6">
            <div className="flex h-[60px] w-[1308px] items-center rounded-[10px] bg-[#3c4043] pl-6 text-white">
              <span className="flex size-9 items-center justify-center rounded-full bg-[#01579b] text-[20px]">k</span>
              <span className="ml-6 pt-px text-[20.500px] font-medium tracking-[0.250px]">kamal radwan is presenting</span>
            </div>
            <PaintWindow />
          </section>
          <PeoplePanel />
        </div>
        <SelfView />
        <MeetBar />
      </main>
      <Taskbar />
    </div>
  );
}
